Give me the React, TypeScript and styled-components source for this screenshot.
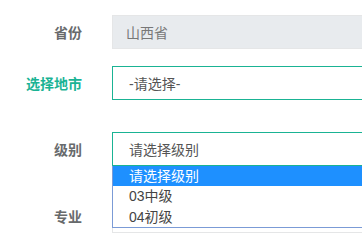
import React from "react";
import styled, { createGlobalStyle } from "styled-components";

const GlobalStyle = createGlobalStyle`
  html, body {
    margin: 0;
    padding: 0;
    background: #fff;
    overflow: hidden;
  }
  body {
    font-family: "Liberation Sans", "Noto Sans CJK SC", sans-serif;
  }
`;

const Form = styled.div`
  width: 440px;
  padding-top: 15px;
`;

const Row = styled.div<{ gap: number }>`
  display: flex;
  align-items: center;
  margin-top: ${({ gap }) => gap}px;
  &:first-child {
    margin-top: 0;
  }
`;

const Label = styled.label<{ active?: boolean }>`
  width: 82px;
  margin-right: 30px;
  text-align: right;
  font-size: 14px;
  font-weight: bold;
  color: ${({ active }) => (active ? "#1ab394" : "#676a6c")};
  flex-shrink: 0;
`;

const Field = styled.div`
  position: relative;
  flex: 1;
`;

const Box = styled.div<{ focused?: boolean; disabled?: boolean; select?: boolean }>`
  height: 34px;
  box-sizing: border-box;
  display: flex;
  align-items: center;
  padding: 0 ${({ select }) => (select ? 16 : 13)}px;
  font-size: 14px;
  color: ${({ disabled }) => (disabled ? "#777" : "#555")};
  background: ${({ disabled }) => (disabled ? "#e8ebee" : "#fff")};
  border: 1px solid ${({ focused }) => (focused ? "#1ab394" : "#e5e6e7")};
`;

const Options = styled.ul`
  position: absolute;
  top: 100%;
  left: 0;
  right: 0;
  margin: 0;
  padding: 0;
  list-style: none;
  background: #fff;
  border: 1px solid #7b9bd6;
  border-top: none;
  z-index: 2;
`;

const Option = styled.li<{ selected?: boolean }>`
  height: 20.3px;
  line-height: 20px;
  padding-left: 16px;
  font-size: 14px;
  color: ${({ selected }) => (selected ? "#fff" : "#444")};
  background: ${({ selected }) => (selected ? "#1e90ff" : "#fff")};
`;

const levels = ["请选择级别", "03中级", "04初级"];

export default function App() {
  return (
    <>
      <GlobalStyle />
      <Form>
        <Row gap={0}>
          <Label>省份</Label>
          <Field>
            <Box disabled>山西省</Box>
          </Field>
        </Row>
        <Row gap={17}>
          <Label active>选择地市</Label>
          <Field>
            <Box focused select>-请选择-</Box>
          </Field>
        </Row>
        <Row gap={32}>
          <Label>级别</Label>
          <Field>
            <Box focused select>请选择级别</Box>
            <Options>
              {levels.map((l, i) => (
                <Option key={l} selected={i === 0}>
                  {l}
                </Option>
              ))}
            </Options>
          </Field>
        </Row>
        <Row gap={33}>
          <Label>专业</Label>
          <Field>
            <Box select />
          </Field>
        </Row>
      </Form>
    </>
  );
}
